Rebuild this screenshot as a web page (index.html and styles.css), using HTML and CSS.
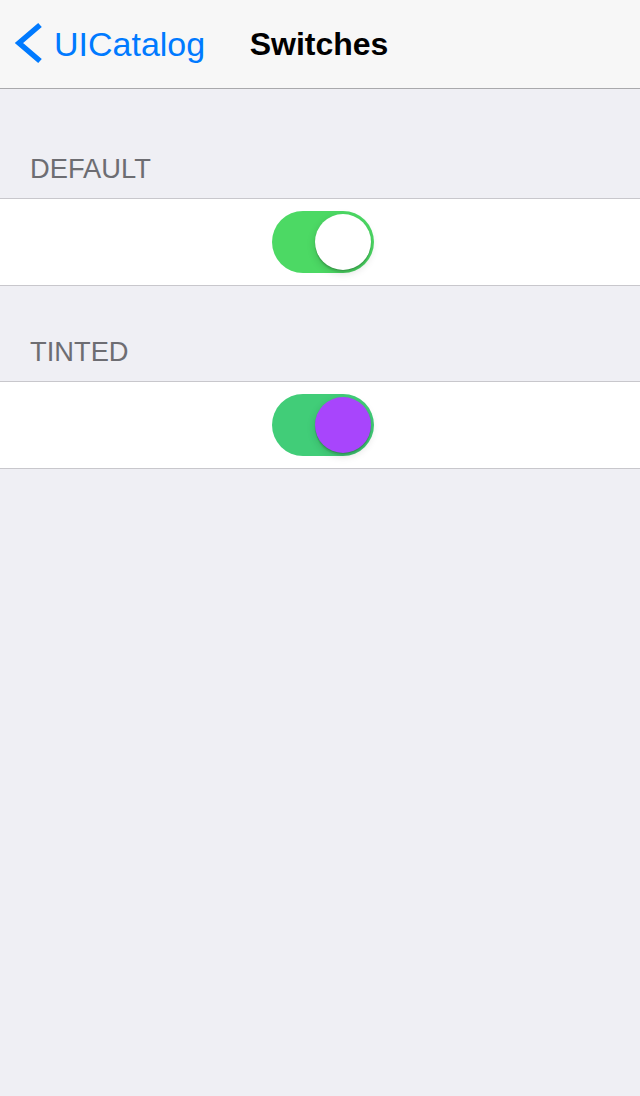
FILE: index.html
```html
<!DOCTYPE html>
<html>
<head>
<meta charset="utf-8">
<link rel="stylesheet" href="styles.css">
</head>
<body>
<header class="nav">
  <a class="back">
    <svg class="chevron" width="30" height="44" viewBox="0 0 30 44">
      <polyline points="26,3 5,21 26,39" fill="none" stroke="#007aff" stroke-width="5.5" stroke-linejoin="miter"/>
    </svg>
    <span class="back-label">UICatalog</span>
  </a>
  <h1 class="title">Switches</h1>
  <div class="spacer"></div>
</header>
<main>
  <section class="group first">
    <h2 class="group-header">DEFAULT</h2>
    <div class="cell">
      <div class="switch switch-default"><div class="knob knob-default"></div></div>
    </div>
  </section>
  <section class="group">
    <h2 class="group-header">TINTED</h2>
    <div class="cell">
      <div class="switch switch-tinted"><div class="knob knob-tinted"></div></div>
    </div>
  </section>
</main>
</body>
</html>
```
FILE: styles.css
```css
html, body {
  margin: 0;
  padding: 0;
}
body {
  background: #efeff4;
  font-family: "Liberation Sans", Arial, sans-serif;
  width: 640px;
  height: 1096px;
}
.nav {
  height: 88px;
  background: #f7f7f7;
  border-bottom: 1px solid #a9a9ac;
  display: grid;
  grid-template-columns: 1fr auto 1fr;
  align-items: center;
}
.back {
  display: flex;
  align-items: center;
  color: #007aff;
  padding-left: 14px;
}
.chevron {
  display: block;
}
.back-label {
  font-size: 34px;
  margin-left: 10px;
  line-height: 40px;
  margin-top: -1px;
}
.title {
  margin: 0 0 0 -2px;
  font-size: 32px;
  font-weight: bold;
  color: #000;
  line-height: 40px;
  margin-top: -1px;
}
.group-header {
  margin: 0;
  font-weight: normal;
  font-size: 27.3px;
  line-height: 26px;
  color: #6d6d72;
  padding: 53px 30px 16px;
}
.group.first .group-header {
  padding-top: 67px;
}
.cell {
  background: #fff;
  border-top: 1px solid #c8c7cc;
  border-bottom: 1px solid #c8c7cc;
  height: 86px;
  display: flex;
  align-items: center;
  justify-content: center;
  padding-left: 6px;
  box-sizing: content-box;
}
.switch {
  position: relative;
  width: 102px;
  height: 62px;
  border-radius: 31px;
}
.switch-default {
  background: #4cd964;
}
.switch-tinted {
  background: #41cd78;
}
.knob {
  position: absolute;
  left: 43px;
  top: 3px;
  width: 56px;
  height: 56px;
  border-radius: 50%;
  box-shadow: 0 3px 8px rgba(0, 0, 0, 0.15), 0 1px 1px rgba(0, 0, 0, 0.16), 0 3px 1px rgba(0, 0, 0, 0.08);
}
.knob-default {
  background: #fff;
}
.knob-tinted {
  background: #a845fc;
}
```
